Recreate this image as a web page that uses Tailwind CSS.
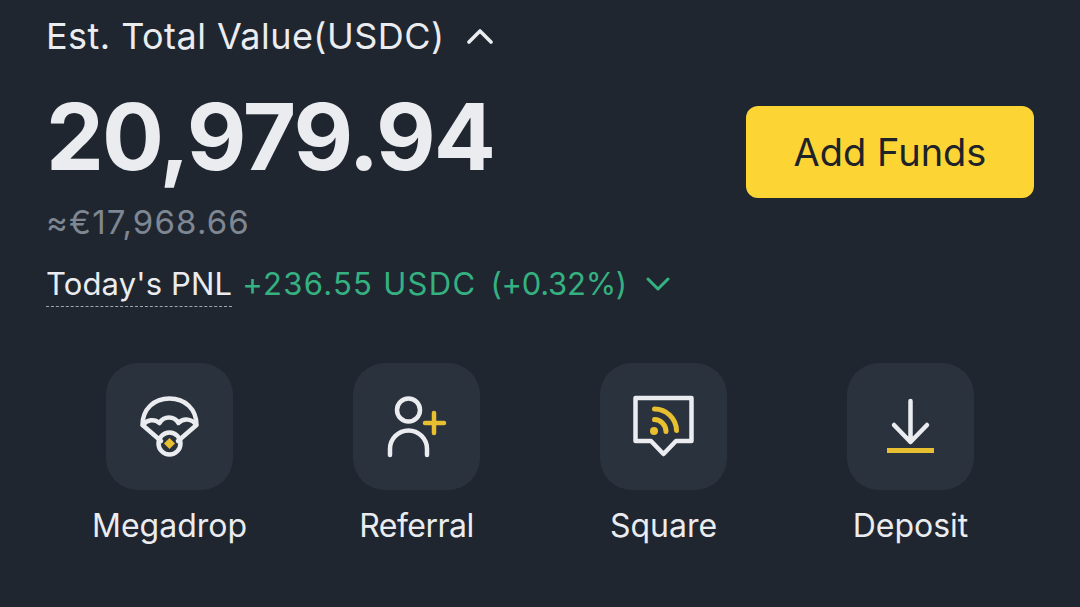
<!DOCTYPE html>
<html><head><meta charset="utf-8"><script src="https://cdn.jsdelivr.net/npm/@tailwindcss/browser@4"></script></head>
<body class="m-0 bg-[#1f2630]">
<div class="w-[1080px] h-[607px] overflow-hidden bg-[#1f2630] px-[46px] font-['Inter',sans-serif] text-[#eaecef]">
  <div class="flex items-center gap-[22px] h-[36px] mt-[18px] text-[36px] leading-[36px] tracking-[0.45px]">
    <span>Est. Total Value(USDC)</span>
    <svg width="28" height="16" viewBox="0 0 28 16" fill="none" stroke="#eaecef" stroke-width="3.6" stroke-linecap="round" stroke-linejoin="round"><path d="M3 14 14 3 25 14"/></svg>
  </div>
  <div class="flex items-center justify-between h-[92px] mt-[52px]">
    <div class="text-[92px] leading-[92px] font-bold -mt-[30px] tracking-[-2px]">20,979.94</div>
    <div class="w-[288px] h-[92px] rounded-[12px] bg-[#fcd535] flex items-center justify-center text-[38px] text-[#1e2329]">Add Funds</div>
  </div>
  <div class="mt-[7px] h-[34px] text-[33px] leading-[34px] tracking-[1.15px] text-[#7f8792]">≈€17,968.66</div>
  <div class="flex items-start mt-[25px] h-[40px] text-[31px] leading-[40px]">
    <span class="border-b border-dashed border-[#a0a6ae] h-[43px] tracking-[0.15px]">Today's PNL</span>
    <span class="ml-[10px] text-[#35b181] tracking-[1.3px]">+236.55 USDC</span>
    <span class="ml-[14px] text-[#35b181] tracking-[-0.25px]">(+0.32%)</span>
    <svg class="ml-[19px] mt-[13px]" width="24" height="14" viewBox="0 0 24 14" fill="none" stroke="#35b181" stroke-width="3" stroke-linecap="round" stroke-linejoin="round"><path d="M2 2 12 12 22 2"/></svg>
  </div>
  <div class="grid grid-cols-4 mt-[59px]">
    <div class="flex flex-col items-center">
      <div class="w-[127px] h-[127px] rounded-[32px] bg-[#2a323d]">
        <svg width="127" height="127" viewBox="0 0 127 127" fill="none" stroke="#eaecef" stroke-width="4.500" stroke-linecap="round" stroke-linejoin="round">
          <path d="M36.500 62C36.500 46 48 35.500 63.500 35.500S90.500 46 90.500 62L72 78M36.500 62L55 78"/>
          <path d="M37 62A11 11 0 0 1 53.500 60A11 11 0 0 1 72.500 60A11 11 0 0 1 90 62"/>
          <circle cx="63.500" cy="80.500" r="11"/>
          <path d="M63.500 75 69 80.500 63.500 86 58 80.500Z" fill="#e9bf32" stroke="none"/>
        </svg>
      </div>
      <span class="mt-[16px] text-[32px] leading-[40px]">Megadrop</span>
    </div>
    <div class="flex flex-col items-center">
      <div class="w-[127px] h-[127px] rounded-[32px] bg-[#2a323d]">
        <svg width="127" height="127" viewBox="0 0 127 127" fill="none" stroke="#eaecef" stroke-width="4.500" stroke-linecap="round" stroke-linejoin="round">
          <circle cx="55.500" cy="47" r="11.500"/>
          <path d="M37 92V86a18.500 18.500 0 0 1 37 0V92"/>
          <path d="M72 60H91M81 50V70" stroke="#e9bf32"/>
        </svg>
      </div>
      <span class="mt-[16px] text-[32px] leading-[40px] tracking-[-0.5px]">Referral</span>
    </div>
    <div class="flex flex-col items-center">
      <div class="w-[127px] h-[127px] rounded-[32px] bg-[#2a323d]">
        <svg width="127" height="127" viewBox="0 0 127 127" fill="none" stroke="#eaecef" stroke-width="4.500" stroke-linecap="round" stroke-linejoin="round">
          <path d="M35.500 35H91.500V78H76L63.500 91 51 78H35.500Z"/>
          <circle cx="54" cy="68" r="4" fill="#e9bf32" stroke="none"/>
          <path d="M54.500 56.500A12 12 0 0 1 66 68.500M54.500 46A22 22 0 0 1 76.500 67.500" stroke="#e9bf32" stroke-width="5"/>
        </svg>
      </div>
      <span class="mt-[16px] text-[32px] leading-[40px]">Square</span>
    </div>
    <div class="flex flex-col items-center">
      <div class="w-[127px] h-[127px] rounded-[32px] bg-[#2a323d]">
        <svg width="127" height="127" viewBox="0 0 127 127" fill="none" stroke="#eaecef" stroke-width="4.500" stroke-linecap="round" stroke-linejoin="round">
          <path d="M63.500 38V79M47 62 63.500 79 80 62"/>
          <path d="M40 87.500H87" stroke="#e9bf32" stroke-width="5" stroke-linecap="butt"/>
        </svg>
      </div>
      <span class="mt-[16px] text-[32px] leading-[40px]">Deposit</span>
    </div>
  </div>
</div>
</body></html>
